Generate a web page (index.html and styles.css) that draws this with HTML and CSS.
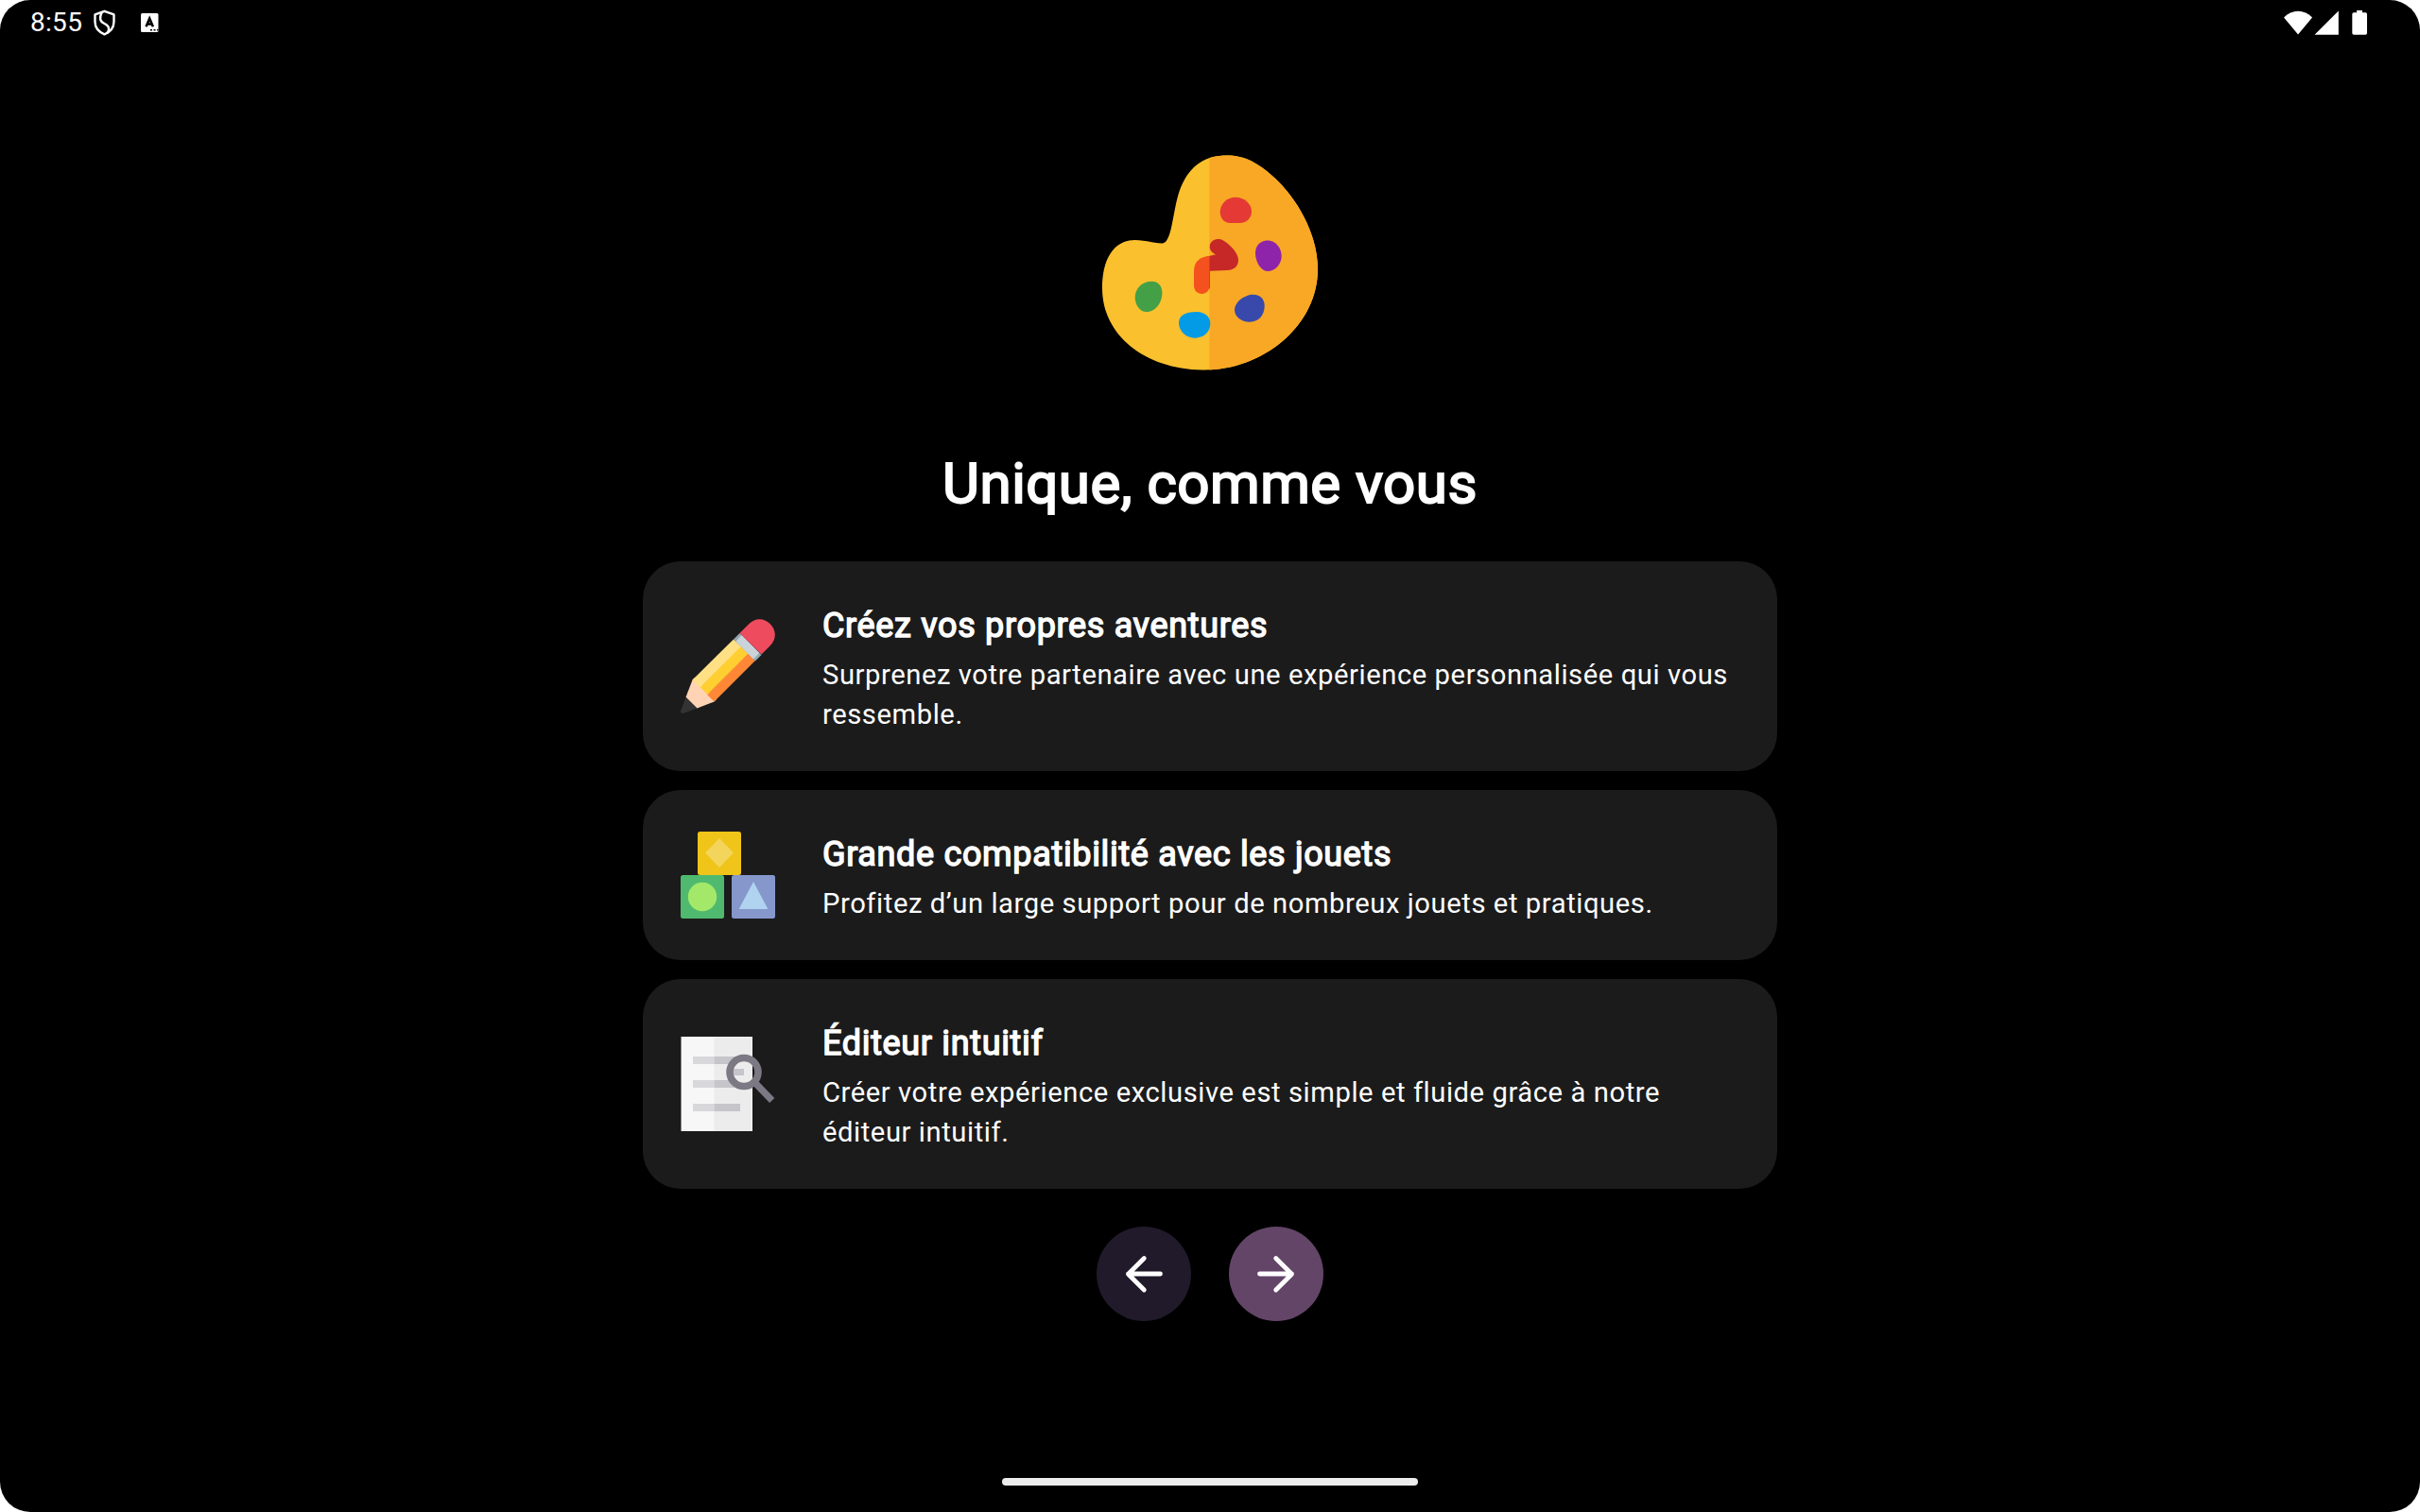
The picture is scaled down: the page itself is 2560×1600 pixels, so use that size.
FILE: index.html
```html
<!DOCTYPE html>
<html lang="fr">
<head>
<meta charset="utf-8">
<title>Unique, comme vous</title>
<link rel="stylesheet" href="styles.css">
</head>
<body>
<div class="screen">
  <header class="status">
    <span class="clock">8:55</span>
    <svg class="shield" viewBox="0 0 24 28" fill="none" stroke="#fff" stroke-width="2.4" stroke-linejoin="round"><path d="M11.500 1.800L21.500 5.400V13C21.500 19.400 17 24 11.500 26.400C6 24 1.500 19.400 1.500 13V5.400Z"/><path d="M8.800 3C5.500 9.500 7 13 11.500 15C16.500 17.400 17.300 20.500 14.500 25"/></svg>
    <svg class="keyboard" viewBox="0 0 20 20"><rect x="0" y="0" width="18.500" height="20" rx="1.500" fill="#fff"/><path d="M5.500 14.300L9.200 5.500L12.900 14.300M7 11.500H11.500" fill="none" stroke="#000" stroke-width="2.500"/><path d="M10 17.700h2m1.500 0h2m1.500 0h1.500" stroke="#000" stroke-width="1.500"/></svg>
    <svg class="signals" viewBox="0 0 90 26" fill="#fff"><path d="M0 7.500C8.500 -1.500 21.500 -1.500 30 7.500L15 25.500Z"/><path d="M32.500 25.700L57.800 0.500V25.700Z"/><path d="M77 0h6v2.200h3.300q1.700 0 1.700 1.700v20q0 1.800-1.700 1.800h-12.300q-1.700 0-1.700-1.800v-20q0-1.700 1.700-1.700H77Z"/></svg>
  </header>
  <main class="content">
    <svg class="palette" viewBox="0 0 228 228">
      <defs><clipPath id="right-half"><path d="M113.300 0H228V228H113.300Z"/></clipPath></defs>
      <path fill="#fbc02d" d="M131.500 0.500C141 0.500 149.500 2.200 158 6.500C196 27 228 76 228 121C228 180 171 227.500 108 227.500C46 227.500 0 191 0 141C0 112 11 90 34.500 90C45 90 53 93 63 93.500C75.500 94 74 51 85 30C94 11 109 0.500 131.500 0.500Z"/>
      <path fill="#f9a825" clip-path="url(#right-half)" d="M131.500 0.500C141 0.500 149.500 2.200 158 6.500C196 27 228 76 228 121C228 180 171 227.500 108 227.500C46 227.500 0 191 0 141C0 112 11 90 34.500 90C45 90 53 93 63 93.500C75.500 94 74 51 85 30C94 11 109 0.500 131.500 0.500Z"/>
      <path fill="#e53935" d="M141 44.700C150 44.700 158 51.500 158 60C158 67 152 72 146 72H135C129 72 124.700 67 124.700 60C125 51.500 132 44.700 141 44.700Z"/>
      <path fill="#8e24aa" d="M175 90.500C183 90.500 189.700 98 189.700 107C189.700 115.500 183 123 174.500 123C168 123 162 113 162 104C162 96 167 90.500 175 90.500Z"/>
      <path fill="#3949ab" d="M160 147.800C167.500 147.800 171.700 153 171.700 159.500C171.700 169 166 176.700 156 176.700C147 176.700 140 171 140 164C140 156 150 147.800 160 147.800Z"/>
      <path fill="#039be5" d="M100 166C108 166 114.300 171 114.300 178C114.300 187 107.500 193.700 98 193.700C88 193.700 81 186 81 177.500C81 168.500 90 166 100 166Z"/>
      <path fill="#43a047" d="M52.500 133.700C59 133.700 63.400 138.500 63.400 146C63.400 156 56.500 166 47 166C39 166 34.700 158 34.700 150.500C34.700 141 42.500 133.700 52.500 133.700Z"/>
      <path fill="#f4511e" d="M114 106.700C104 107.500 97 112.500 97 123V138C97 150 114 150 114 137Z"/>
      <path fill="#c62828" d="M120 105.500C114.500 102 113.700 99.500 113.700 97C113.700 90 122 87 128 90.500C134 94 144 103 144 111C144 118 139 122 132 122L114 122.700V106.700Q117 106 120 105.500Z"/>
      <path fill="#dd3e1a" d="M113 107h1v33q-.3 1-1 2Z"/>
    </svg>
    <h1 class="title">Unique, comme vous</h1>
    <section class="cards">
      <article class="card">
        <svg class="icon" viewBox="0 0 100 100">
          <path fill="#ffd3b3" d="M12.500 64.500L15 62L38 85L35.500 87.500L17.300 94.500L5.500 82.700Z"/>
          <path fill="#ff8736" d="M71 36L79 44L35.500 87.500L28 80Z"/>
          <path fill="#ffcf31" d="M63.500 28.500L71.500 36.500L28.500 80L20.500 72Z"/>
          <path fill="#ffe085" d="M56 21.500L64 29L20.500 72.500L12.500 64.500Z"/>
          <path fill="#333" d="M5.500 82.700L17.300 94.500L2.500 100Q0 100 0 97.500Z"/>
          <path fill="#96a9b2" d="M62.500 15L85.500 38L79 44.500L56 21.500Z"/>
          <path fill="#c9d3d9" d="M64.700 17L83.300 36L77 42.500L58.300 23.800Z"/>
          <path fill="#ee4b5e" d="M62.500 15L72.500 5C79 -1.500 88 -1.500 94.500 5C101.500 12 101.500 21 95 28L85.500 37.500Z"/>
        </svg>
        <div class="text"><h2>Créez vos propres aventures</h2><p>Surprenez votre partenaire avec une expérience personnalisée qui vous ressemble.</p></div>
      </article>
      <article class="card">
        <svg class="icon" viewBox="0 0 100 100">
          <rect x="18" y="4" width="46" height="46" rx="2.500" fill="#f0c419"/><path d="M41 11L56 26.500L41 42L26 26.500Z" fill="#f3d55b"/>
          <rect x="0" y="50" width="46" height="46" rx="2.500" fill="#4fba6f"/><circle cx="23" cy="73" r="15.200" fill="#a4e869"/>
          <rect x="54" y="50" width="46" height="46" rx="2.500" fill="#8697cb"/><path d="M77 57L92.300 86H61.700Z" fill="#b0d3f0"/>
        </svg>
        <div class="text"><h2>Grande compatibilité avec les jouets</h2><p>Profitez d’un large support pour de nombreux jouets et pratiques.</p></div>
      </article>
      <article class="card">
        <svg class="icon" viewBox="0 0 100 100">
          <path d="M0.500 0H36V100H0.500Z" fill="#f7f7f7"/><path d="M35.500 0H76V100H35.500Z" fill="#ececec"/>
          <path d="M13 21h22.500v8H13zM13 46h22.500v8H13zM13 71h22.500v8H13z" fill="#d8d8da"/>
          <path d="M35.500 21H60v8H35.500zM35.500 46H60v8H35.500zM35.500 71H63v8H35.500zM53 34H67v7H53z" fill="#c6c5ca"/>
          <circle cx="67" cy="37.500" r="15" fill="none" stroke="#7c7985" stroke-width="7.600"/><path d="M77.500 47.500L96.700 67.500" stroke="#7c7985" stroke-width="7.200"/>
        </svg>
        <div class="text"><h2>Éditeur intuitif</h2><p>Créer votre expérience exclusive est simple et fluide grâce à notre éditeur intuitif.</p></div>
      </article>
    </section>
    <nav class="pager">
      <button class="round back" aria-label="Précédent"><svg viewBox="0 0 100 100"><path d="M67.500 50H33.500M50.300 33.500L33.500 50.200L50.300 67"/></svg></button>
      <button class="round next" aria-label="Suivant"><svg viewBox="0 0 100 100"><path d="M32.500 50H66.500M49.700 33.500L66.500 50.200L49.700 67"/></svg></button>
    </nav>
  </main>
  <div class="home"></div>
</div>
</body>
</html>
```
FILE: styles.css
```css
* { box-sizing: border-box; margin: 0; padding: 0; }
body { background: #fff; font-family: Roboto, sans-serif; color: #fff; }
.screen { width: 2560px; height: 1600px; background: #000; border-radius: 32px; overflow: hidden; display: flex; flex-direction: column; align-items: center; }
.status { width: 100%; height: 48px; display: flex; align-items: center; padding: 0 54px 0 32px; }
.clock { font-size: 28px; line-height: 48px; letter-spacing: 0.3px; }
.shield { width: 24px; height: 28px; margin-left: 12px; }
.keyboard { width: 20px; height: 20px; margin-left: 26px; }
.signals { width: 90px; height: 26px; margin-left: auto; }
svg { display: block; flex: none; }
.content { flex: 1; display: flex; flex-direction: column; align-items: center; padding-top: 116px; }
.palette { width: 228px; height: 228px; }
.title { margin-top: 80px; font-size: 60px; line-height: 80px; letter-spacing: 0.5px; font-weight: 400; -webkit-text-stroke: 2px #fff; white-space: nowrap; }
.cards { width: 1200px; margin-top: 42px; display: flex; flex-direction: column; gap: 20px; }
.card { background: #1b1b1b; border-radius: 40px; padding: 40px; display: flex; align-items: center; gap: 50px; }
.icon { width: 100px; height: 100px; overflow: visible; }
.text { flex: 1; margin: 1px 0 -1px; }
.text h2 { font-size: 36px; line-height: 54px; padding-bottom: 4px; font-weight: 400; letter-spacing: 0.66px; -webkit-text-stroke: 1.4px #fff; }
.text p { font-size: 29.2px; line-height: 42px; letter-spacing: 0.57px; }
.pager { display: flex; gap: 40px; margin-top: 40px; }
.round { width: 100px; height: 100px; border: 0; border-radius: 50%; }
.round svg { width: 100px; height: 100px; fill: none; stroke: #fff; stroke-width: 4.800; stroke-linecap: round; stroke-linejoin: round; }
.back { background: #201a2b; }
.next { background: #634568; }
.home { width: 440px; height: 8px; border-radius: 4px; background: #ececec; margin-bottom: 28px; }
```
